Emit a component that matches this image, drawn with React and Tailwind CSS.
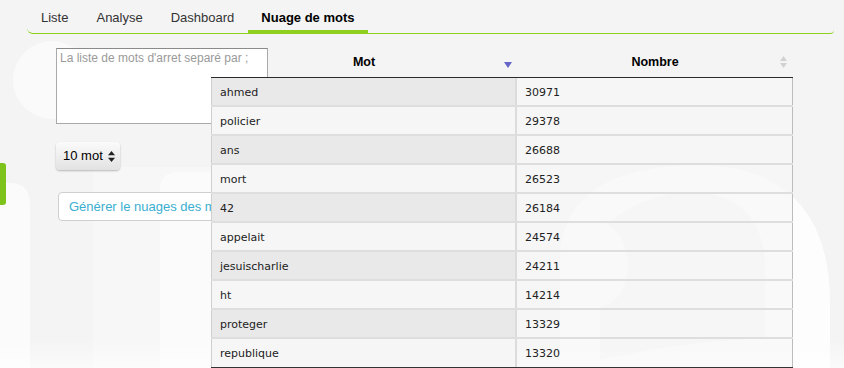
import React from "react";

const rows = [
    ["ahmed", "30971"],
    ["policier", "29378"],
    ["ans", "26688"],
    ["mort", "26523"],
    ["42", "26184"],
    ["appelait", "24574"],
    ["jesuischarlie", "24211"],
    ["ht", "14214"],
    ["proteger", "13329"],
    ["republique", "13320"],
];

const tabs = ["Liste", "Analyse", "Dashboard", "Nuage de mots"];

function Watermark() {
    return (
        <svg className="absolute inset-0 pointer-events-none" width="844" height="368" viewBox="0 0 844 368">
            <circle cx="52" cy="80" r="39" fill="#fafafa" />
            <path d="M-20 368 L-20 200 Q-20 183 0 183 L10 183 Q30 183 30 205 L30 368 Z" fill="#fbfbfb" />
            <rect x="93" y="167" width="120" height="201" fill="#f7f7f7" />
            <path d="M160 368 L160 190 Q160 172 178 172 L213 172 L213 368 Z" fill="#fbfbfb" />
            <path d="M560 368 L560 250 Q570 165 700 165 Q828 168 830 300 L830 368 Z" fill="#fdfdfd" />
            <path d="M600 360 L600 230 Q640 192 695 192 Q762 196 765 265 L765 338 Q680 342 600 360 Z" fill="#f4f4f4" />
            <ellipse cx="598" cy="265" rx="30" ry="42" fill="#fdfdfd" />
            <defs>
                <linearGradient id="fade" x1="0" y1="0" x2="0" y2="1">
                    <stop offset="0" stopColor="#ffffff" stopOpacity="0" />
                    <stop offset="1" stopColor="#ffffff" stopOpacity="0.6" />
                </linearGradient>
            </defs>
            <rect x="0" y="340" width="844" height="28" fill="url(#fade)" />
        </svg>
    );
}

export default function App() {
    return (
        <div className="relative w-[844px] h-[368px] overflow-hidden bg-[#f4f4f4] font-['Liberation_Sans',Arial,sans-serif]">
            <Watermark />

            {/* feedback tab */}
            <div className="absolute left-0 top-[163px] w-[6px] h-[42px] rounded-r-[3px] bg-[#7dc31b]" />

            <div className="relative pl-[27px] pr-[10px]">
                {/* Tabs */}
                <nav className="flex h-[34px] border-b border-[#8fcf1d] rounded-bl-[6px] rounded-br-[4px]">
                    {tabs.map((t, i) => {
                        const active = i === tabs.length - 1;
                        return (
                            <div
                                key={t}
                                className={
                                    active
                                        ? "flex items-end px-[13px] pb-[5px] border-b-[3px] border-[#8fcf1d] text-[13px] leading-[15px] font-bold text-black"
                                        : "flex items-end px-[14px] pb-[5px] border-b-[3px] border-transparent text-[13px] leading-[15px] text-[#333]"
                                }
                            >
                                {t}
                            </div>
                        );
                    })}
                </nav>

                <div className="flex mt-[14px]">
                    {/* Left column */}
                    <div className="w-[184px] shrink-0 pl-[29px] flex flex-col items-start">
                        <textarea
                            placeholder="La liste de mots d'arret separé par ;"
                            className="w-[212px] h-[76px] shrink-0 bg-white border border-[#a9a9a9] border-t-[#8a8a8a] px-[3px] py-[2px] text-[12px] leading-[15px] text-[#333] placeholder:text-[#9a9a9a] resize-none outline-none"
                        />
                        <div className="mt-[18px] w-[64px] h-[28px] shrink-0 rounded-[4px] bg-gradient-to-b from-[#fbfbfb] to-[#e2e2e2] shadow-[0_1px_2px_rgba(0,0,0,0.25)] flex items-center pl-[7px] pr-[5px] text-[13px] text-black">
                            <span>10 mot</span>
                            <svg className="ml-auto" width="7" height="11" viewBox="0 0 7 11">
                                <path d="M3.5 0 L7 4.3 L0 4.3 Z" fill="#222" />
                                <path d="M3.5 11 L7 6.7 L0 6.7 Z" fill="#222" />
                            </svg>
                        </div>
                        <button className="mt-[22px] ml-[2px] w-[156px] h-[29px] shrink-0 overflow-hidden whitespace-nowrap text-left bg-white border border-[#cfcfcf] rounded-l-[4px] pl-[10px] text-[13px] text-[#3aaed0]">
                            Générer le nuages des m
                        </button>
                    </div>

                    {/* Table */}
                    <div className="relative z-10 w-[582px] shrink-0">
                        <div className="flex h-[30px] border-b border-[#2a2a2a] text-[12.5px] font-bold text-black">
                            <div className="relative w-[306px] flex items-center justify-center">
                                Mot
                                <svg className="absolute right-[5px] top-[14px]" width="8" height="6" viewBox="0 0 8 6">
                                    <path d="M0 0 L8 0 L4 6 Z" fill="#6565c9" />
                                </svg>
                            </div>
                            <div className="relative flex-1 flex items-center justify-center">
                                Nombre
                                <svg className="absolute right-[6px] top-[8px]" width="7" height="12" viewBox="0 0 7 12">
                                    <path d="M3.5 0 L7 5 L0 5 Z" fill="#d2d2d2" />
                                    <path d="M3.5 12 L7 7 L0 7 Z" fill="#d2d2d2" />
                                </svg>
                            </div>
                        </div>
                        {rows.map(([mot, n], i) => {
                            const last = i === rows.length - 1;
                            return (
                                <div
                                    key={mot}
                                    className={
                                        last
                                            ? "flex h-[29px] border-b border-[#333] font-['DejaVu_Sans',Verdana,sans-serif] text-[11px] text-[#222]"
                                            : "flex h-[29px] border-b-2 border-[#dedede] font-['DejaVu_Sans',Verdana,sans-serif] text-[11px] text-[#222]"
                                    }
                                >
                                    <div
                                        className={
                                            i % 2 === 0
                                                ? "w-[306px] flex items-center pl-[8px] pt-[3px] bg-[#e9e9e9] border-l border-[#cfcfcf] border-r-2 border-r-[#dcdcdc]"
                                                : "w-[306px] flex items-center pl-[8px] pt-[3px] bg-[#f6f6f6] border-l border-[#cfcfcf] border-r-2 border-r-[#dcdcdc]"
                                        }
                                    >
                                        {mot}
                                    </div>
                                    <div className="flex-1 flex items-center pl-[8px] pt-[3px] bg-[#f6f6f6]/60 border-r border-[#bcbcbc]">
                                        {n}
                                    </div>
                                </div>
                            );
                        })}
                    </div>
                </div>
            </div>
        </div>
    );
}
